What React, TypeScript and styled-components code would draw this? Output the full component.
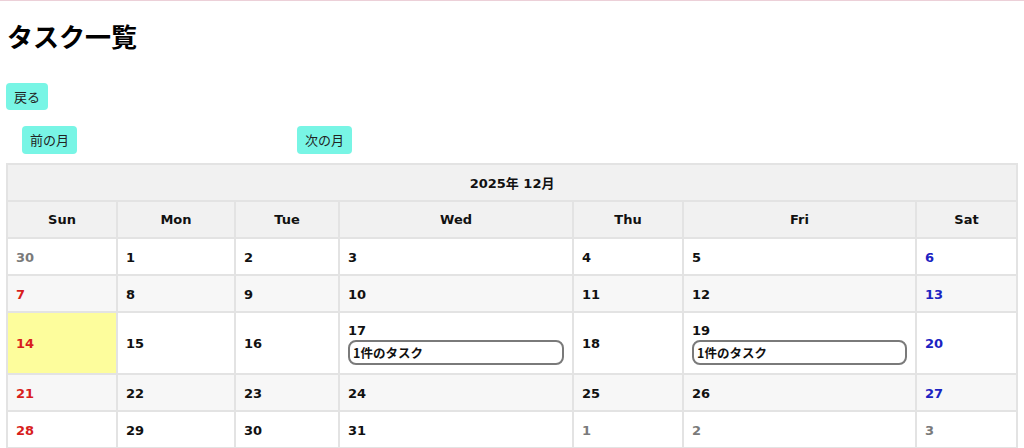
import React from "react";
import styled, { createGlobalStyle } from "styled-components";

const GlobalStyle = createGlobalStyle`
  html, body {
    margin: 0;
    padding: 0;
    background: #fff;
  }
  body {
    border-top: 1px solid #ecd0d8;
    font-family: "DejaVu Sans", "Noto Sans CJK JP", sans-serif;
    color: #111;
  }
`;

const Page = styled.div`
  padding: 0 8px 0 6px;
`;

const Title = styled.h1`
  margin: 18px 0 0 1px;
  font-family: "Noto Sans CJK JP", sans-serif;
  font-size: 26px;
  line-height: 34px;
  font-weight: 700;
  color: #000;
`;

const MintButton = styled.button`
  display: inline-block;
  border: none;
  border-radius: 4px;
  background: #78f5e5;
  color: #222;
  font-family: "Noto Sans CJK JP", sans-serif;
  font-size: 13px;
  line-height: 16px;
  padding: 5px 8px;
  height: 27px;
  cursor: pointer;
`;

const BackRow = styled.div`
  margin-top: 30px;
`;

const MonthNav = styled.div`
  display: flex;
  gap: 220px;
  margin-top: 16px;
  padding-left: 16px;
`;

const NavButton = styled(MintButton)`
  height: 28px;
`;

const Calendar = styled.table`
  margin-top: 9px;
  width: 1010px;
  border-collapse: collapse;
  table-layout: fixed;
  border: 2px solid #e3e3e3;
  font-size: 13px;
  font-weight: 700;
`;

const Caption = styled.th`
  background: #f1f1f1;
  border: 2px solid #e3e3e3;
  height: 35px;
  padding: 0;
  text-align: center;
`;

const DayHead = styled.th`
  background: #f1f1f1;
  border: 2px solid #e3e3e3;
  height: 35px;
  padding: 0;
  text-align: center;
`;

const Row = styled.tr<{ $shade: boolean }>`
  height: 37px;
  background: ${(p) => (p.$shade ? "#f7f7f7" : "#fff")};
`;

type Tone = "normal" | "sun" | "sat" | "other";

const toneColor: Record<Tone, string> = {
  normal: "#111",
  sun: "#d81e1e",
  sat: "#1c23c2",
  other: "#7a7a7a",
};

const Cell = styled.td<{ $tone: Tone; $today?: boolean }>`
  border: 2px solid #e3e3e3;
  padding: 9px 8px 8px;
  vertical-align: middle;
  color: ${(p) => toneColor[p.$tone]};
  background: ${(p) => (p.$today ? "#fdfd9c" : "transparent")};
`;

const DateNum = styled.div`
  line-height: 17px;
`;

const TaskChip = styled.div`
  margin-top: 1px;
  border: 2px solid #7a7a7a;
  border-radius: 8px;
  height: 25px;
  box-sizing: border-box;
  padding: 0 3px;
  font-family: "Noto Sans CJK JP", sans-serif;
  font-size: 12.5px;
  font-weight: 700;
  line-height: 21px;
  color: #111;
  background: #fff;
`;

const colWidths = [110, 118, 104, 234, 110, 233, 101];
const dayNames = ["Sun", "Mon", "Tue", "Wed", "Thu", "Fri", "Sat"];

type Day = { n: number; other?: boolean; today?: boolean; tasks?: number };

const weeks: Day[][] = [
  [{ n: 30, other: true }, { n: 1 }, { n: 2 }, { n: 3 }, { n: 4 }, { n: 5 }, { n: 6 }],
  [{ n: 7 }, { n: 8 }, { n: 9 }, { n: 10 }, { n: 11 }, { n: 12 }, { n: 13 }],
  [
    { n: 14, today: true },
    { n: 15 },
    { n: 16 },
    { n: 17, tasks: 1 },
    { n: 18 },
    { n: 19, tasks: 1 },
    { n: 20 },
  ],
  [{ n: 21 }, { n: 22 }, { n: 23 }, { n: 24 }, { n: 25 }, { n: 26 }, { n: 27 }],
  [
    { n: 28 },
    { n: 29 },
    { n: 30 },
    { n: 31 },
    { n: 1, other: true },
    { n: 2, other: true },
    { n: 3, other: true },
  ],
];

function toneOf(day: Day, i: number): Tone {
  if (day.other) return "other";
  if (i === 0) return "sun";
  if (i === 6) return "sat";
  return "normal";
}

function App() {
  return (
    <Page>
      <GlobalStyle />
      <Title>タスク一覧</Title>
      <BackRow>
        <MintButton>戻る</MintButton>
      </BackRow>
      <MonthNav>
        <NavButton>前の月</NavButton>
        <NavButton>次の月</NavButton>
      </MonthNav>
      <Calendar>
        <colgroup>
          {colWidths.map((w, i) => (
            <col key={i} style={{ width: w }} />
          ))}
        </colgroup>
        <thead>
          <tr>
            <Caption colSpan={7}>2025年 12月</Caption>
          </tr>
          <tr>
            {dayNames.map((d) => (
              <DayHead key={d}>{d}</DayHead>
            ))}
          </tr>
        </thead>
        <tbody>
          {weeks.map((week, wi) => (
            <Row key={wi} $shade={wi % 2 === 1}>
              {week.map((day, i) => (
                <Cell key={i} $tone={toneOf(day, i)} $today={day.today}>
                  <DateNum>{day.n}</DateNum>
                  {day.tasks ? <TaskChip>{day.tasks}件のタスク</TaskChip> : null}
                </Cell>
              ))}
            </Row>
          ))}
        </tbody>
      </Calendar>
    </Page>
  );
}

export default App;
